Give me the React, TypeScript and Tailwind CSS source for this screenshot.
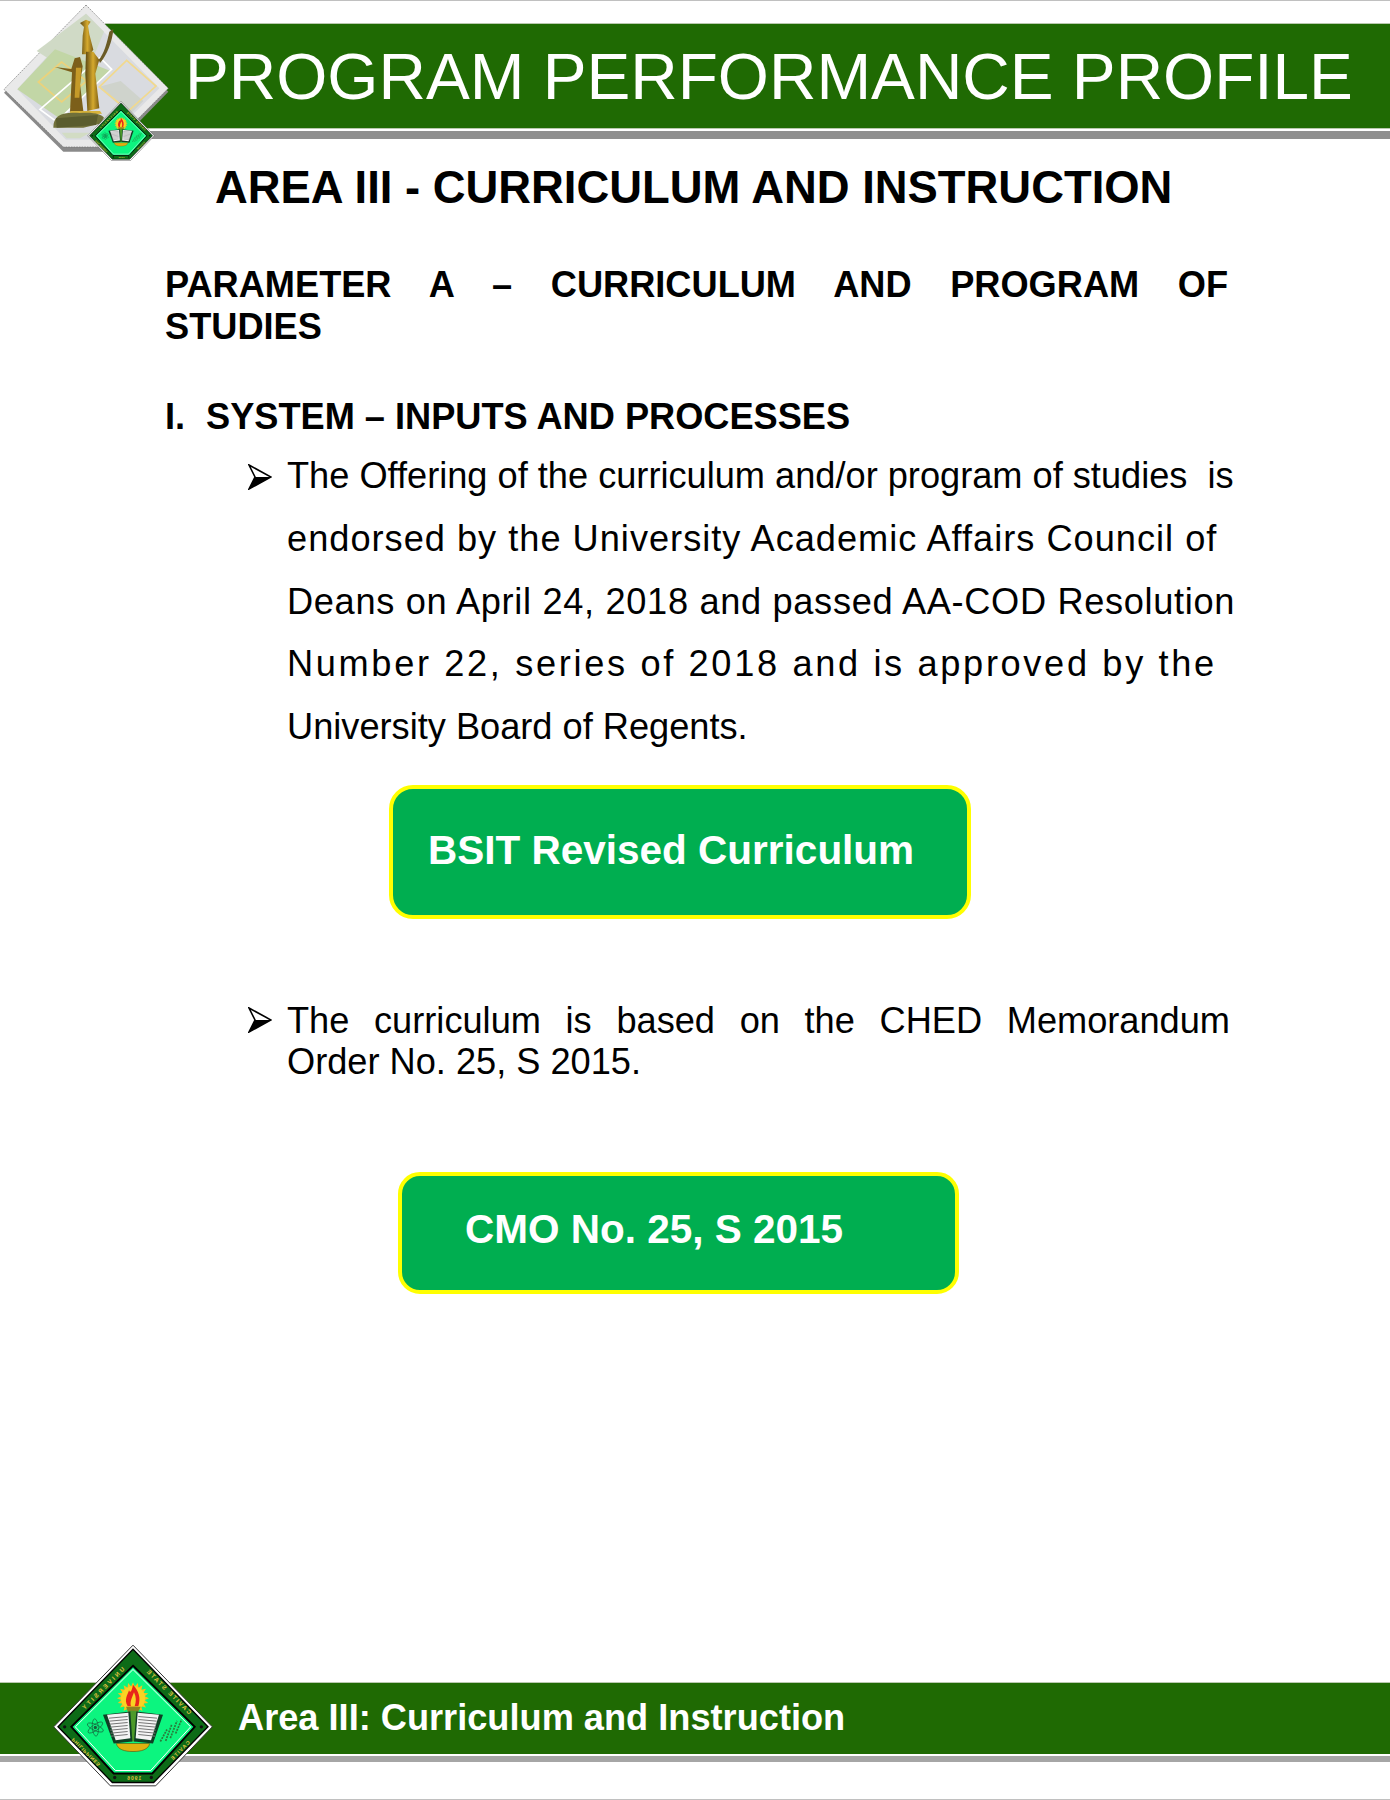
const bodyLines = [
  { text: "The Offering of the curriculum and/or program of studies  is", cls: "tracking-[0px]" },
  { text: "endorsed by the University Academic Affairs Council of", cls: "tracking-[1px]" },
  { text: "Deans on April 24, 2018 and passed AA-COD Resolution", cls: "tracking-[0.67px]" },
  { text: "Number 22, series of 2018 and is approved by the", cls: "tracking-[2.65px]" },
  { text: "University Board of Regents.", cls: "tracking-[0px]" },
];

function Arrow() {
  return (
    <svg viewBox="0 0 24 26" className="h-[26px] w-[24px] shrink-0">
      <path d="M1 1 L23 13 L1 25 L7 13 Z" fill="#fff" stroke="#000" strokeWidth="1.6" strokeLinejoin="miter" />
      <path d="M7 13 L23 13 L1 25 Z" fill="#000" />
    </svg>
  );
}

function Emblem({ className }: { className: string }) {
  const spikes = Array.from({ length: 20 }, (_, i) => i * 18);
  return (
    <svg viewBox="160 70 480 428" className={className}>
      <path d="M400 73 L638 318 L468 495 L332 495 L162 318 Z" fill="#fff" stroke="#333" strokeWidth="3" />
      <path d="M400 85 L625 318 L462 485 L338 485 L175 318 Z" fill="#0d6b17" stroke="#000" strokeWidth="4" />
      <path d="M400 135 L585 318 L458 458 L342 458 L215 318 Z" fill="#0cf57f" stroke="#000" strokeWidth="6" />
      <path d="M400 146 L573 318 L453 449 L347 449 L227 318 Z" fill="#0cf57f" stroke="#fff" strokeWidth="3" />
      {spikes.map((a) => (
        <path key={a} d="M393 200 L400 184 L407 200 Z" fill="#f6c21c" transform={`rotate(${a} 400 232)`} />
      ))}
      <circle cx="400" cy="232" r="36" fill="#f9d423" />
      <path d="M400 192 C418 212 424 232 416 256 L384 256 C372 236 384 222 388 208 C392 218 396 212 400 192 Z" fill="#e8261b" />
      <path d="M403 214 C410 228 410 242 405 256 L394 256 C390 244 396 232 403 214 Z" fill="#f9d423" />
      <path d="M379 258 H423 L414 276 H386 Z" fill="#8d8420" />
      <path d="M386 270 H414 L408 362 H392 Z" fill="#4c9a2a" />
      <path d="M310 282 L392 272 L398 362 L342 368 Z" fill="#0f3f24" />
      <path d="M490 282 L410 272 L403 362 L460 368 Z" fill="#0f3f24" />
      <path d="M322 282 L386 276 L392 352 L348 358 Z" fill="#f4f4f4" />
      <path d="M478 282 L414 276 L408 352 L454 358 Z" fill="#f4f4f4" />
      {[0, 1, 2, 3, 4, 5, 6].map((i) => (
        <g key={i} stroke="#777" strokeWidth="3">
          <line x1={328 + i} y1={292 + i * 9} x2="384" y2={287 + i * 9} />
          <line x1={472 - i} y1={292 + i * 9} x2="416" y2={287 + i * 9} />
        </g>
      ))}
      <path d="M350 368 H450 C446 386 426 392 400 392 C374 392 354 386 350 368 Z" fill="#e0b010" stroke="#5a5a10" strokeWidth="2" />
      <g fill="none" stroke="#16603a" strokeWidth="2">
        <ellipse cx="287" cy="320" rx="26" ry="9" transform="rotate(25 287 320)" />
        <ellipse cx="287" cy="320" rx="26" ry="9" transform="rotate(-35 287 320)" />
        <ellipse cx="287" cy="320" rx="26" ry="9" transform="rotate(85 287 320)" />
      </g>
      <circle cx="287" cy="320" r="5" fill="#16603a" />
      <g fill="none" stroke="#2a7a3a" strokeWidth="5" strokeDasharray="6 3">
        <path d="M482 362 L502 326" />
        <path d="M498 360 L516 312" />
        <path d="M512 352 L532 300" />
        <path d="M528 338 L546 296" />
      </g>
      {[[195, 318], [605, 318], [345, 470], [455, 470]].map(([cx, cy]) => (
        <circle key={cx} cx={cx} cy={cy} r="5" fill="#111" />
      ))}
      <g fill="#e3c244" fontFamily="'Liberation Sans', sans-serif" fontWeight="700" fontSize="18" letterSpacing="7">
        <text transform="translate(376 146) rotate(-45) scale(-1 1)">UNIVERSITY</text>
        <text transform="translate(568 282) rotate(45) scale(-1 1)" letterSpacing="5">CAVITE STATE</text>
        <text transform="translate(222 350) rotate(45) scale(1 -1)" fontSize="15" letterSpacing="2">PHILIPPINES</text>
        <text transform="translate(572 366) rotate(-45) scale(-1 1)" fontSize="15" letterSpacing="4">CAVITE</text>
        <text transform="translate(425 477) scale(-1 1)" fontSize="15" letterSpacing="3">1906</text>
      </g>
    </svg>
  );
}

function StatueLogo() {
  return (
    <svg viewBox="0 0 525 495" className="h-[165px] w-[175px]">
      <defs>
        <linearGradient id="gold" x1="0" y1="0" x2="1" y2="0">
          <stop offset="0" stopColor="#5c4712" />
          <stop offset="0.55" stopColor="#d6aa2e" />
          <stop offset="1" stopColor="#7a5c14" />
        </linearGradient>
      </defs>
      <path d="M258 24 L505 272 L330 452 L190 452 L12 275 Z" fill="#8a8a8a" />
      <path d="M258 12 L505 262 L330 438 L190 438 L12 265 Z" fill="#e9e9e9" stroke="#6f6f6f" strokeWidth="2" strokeDasharray="5 3" />
      <path d="M258 38 L478 262 L322 416 L198 416 L52 265 Z" fill="#d9dbe0" />
      <path d="M258 38 L312 92 L250 240 L110 150 Z" fill="#d0dac6" />
      <path d="M165 145 L332 210 L178 352 L52 265 Z" fill="#c2d6a6" />
      <path d="M295 258 L362 240 L430 300 L390 340 Z" fill="#cfd3cc" />
      <path d="M380 178 L468 255 L385 330 L298 258 Z" fill="none" stroke="#f2d98c" strokeWidth="5" />
      <path d="M185 183 L115 243 L185 303 L260 240 Z" fill="none" stroke="#ecd27a" strokeWidth="5" />
      <path d="M120 325 L300 170 L335 205 L170 362 Z" fill="none" stroke="#fff" strokeWidth="5" />
      <path d="M185 395 H270 L240 412 H200 Z" fill="#d2dcc4" />
      <path d="M240 66 L258 56 L272 62 L264 74 L268 100 L280 146 L270 160 L246 160 L248 104 L252 78 Z" fill="url(#gold)" />
      <path d="M296 176 C312 160 322 122 328 92 L340 84 C338 120 320 164 300 186 Z" fill="#6a5a26" />
      <path d="M258 152 L280 152 L298 176 L286 218 L298 322 L262 330 L256 220 Z" fill="url(#gold)" />
      <path d="M164 198 L214 204 L224 172 L240 168 L248 196 L240 250 L250 330 L210 332 L216 214 Z" fill="#7c5f1a" />
      <path d="M228 200 L244 200 L238 290 L224 290 Z" fill="#c59a28" />
      <path d="M212 330 H300 L306 338 L206 342 Z" fill="#d6b23a" />
      <path d="M160 380 C160 340 190 332 240 336 C280 332 306 340 312 350 L300 368 L250 380 Z" fill="#70703a" />
      <path d="M168 352 L294 342 L288 372 L170 380 Z" fill="#5a5c2e" />
    </svg>
  );
}

export default function App() {
  return (
    <div className="flex min-h-[1800px] flex-col border-y border-[#c0c0c0] bg-white font-['Liberation_Sans',sans-serif] text-black">
      <header className="relative h-[160px]">
        <div className="ml-[105px] mt-[22px] flex h-[106px] items-center border-y border-[#b9c9ae] bg-[#1f6a03] pl-[80px]">
          <h1 className="whitespace-nowrap pt-[2px] text-[65.7px] leading-none text-white">PROGRAM PERFORMANCE PROFILE</h1>
        </div>
        <div className="ml-[130px] mt-[2px] h-[8px] bg-[#8f8f8f]" />
        <div className="absolute left-0 top-0">
          <StatueLogo />
        </div>
        <Emblem className="absolute left-[87px] top-[100px] h-[60px] w-[68px]" />
      </header>

      <main className="flex flex-col">
        <h2 className="ml-[215px] mt-[2px] whitespace-nowrap text-[45.4px] font-bold leading-[50px]">AREA III - CURRICULUM AND INSTRUCTION</h2>

        <h3 className="ml-[165px] mt-[51px] w-[1063px] text-[36.2px] font-bold leading-[41.5px]">
          <span className="block text-justify [text-align-last:justify]">PARAMETER A – CURRICULUM AND PROGRAM OF</span>
          <span className="block">STUDIES</span>
        </h3>

        <h3 className="ml-[165px] mt-[49px] flex text-[36.2px] font-bold leading-[42px]">
          <span className="w-[41px]">I.</span>
          <span>SYSTEM – INPUTS AND PROCESSES</span>
        </h3>

        <div className="ml-[248px] mt-[7px] flex">
          <div className="w-[39px] pt-[19px]">
            <Arrow />
          </div>
          <div className="text-[36.2px] leading-[62.8px]">
            {bodyLines.map((line) => (
              <p key={line.text} className={`whitespace-pre ${line.cls}`}>
                {line.text}
              </p>
            ))}
          </div>
        </div>

        <div className="ml-[389px] mt-[26px] h-[134px] w-[582px] rounded-[24px] border-[4px] border-[#ffff00] bg-[#00ae50] pl-[35px] pt-[38px]">
          <span className="text-[40.5px] font-bold leading-[46px] text-white">BSIT Revised Curriculum</span>
        </div>

        <div className="ml-[248px] mt-[81px] flex">
          <div className="w-[39px] pt-[7px]">
            <Arrow />
          </div>
          <p className="w-[943px] text-[36.2px] leading-[41px]">
            <span className="block text-justify [text-align-last:justify]">The curriculum is based on the CHED Memorandum</span>
            <span className="block">Order No. 25, S 2015.</span>
          </p>
        </div>

        <div className="ml-[398px] mt-[90px] h-[122px] w-[561px] rounded-[22px] border-[4px] border-[#ffff00] bg-[#00ae50] pl-[63px] pt-[30px]">
          <span className="text-[40.5px] font-bold leading-[46px] text-white">CMO No. 25, S 2015</span>
        </div>
      </main>

      <footer className="relative mt-auto mb-[37px]">
        <div className="flex h-[72px] items-center border-t border-[#b9c9ae] bg-[#1f6a03] pl-[238px]">
          <span className="text-[36.2px] font-bold leading-none text-white">Area III: Curriculum and Instruction</span>
        </div>
        <div className="mt-[2px] h-[6px] bg-[#a6a6a6]" />
        <Emblem className="absolute left-[53px] top-[-38px] h-[143px] w-[160px]" />
      </footer>
    </div>
  );
}
